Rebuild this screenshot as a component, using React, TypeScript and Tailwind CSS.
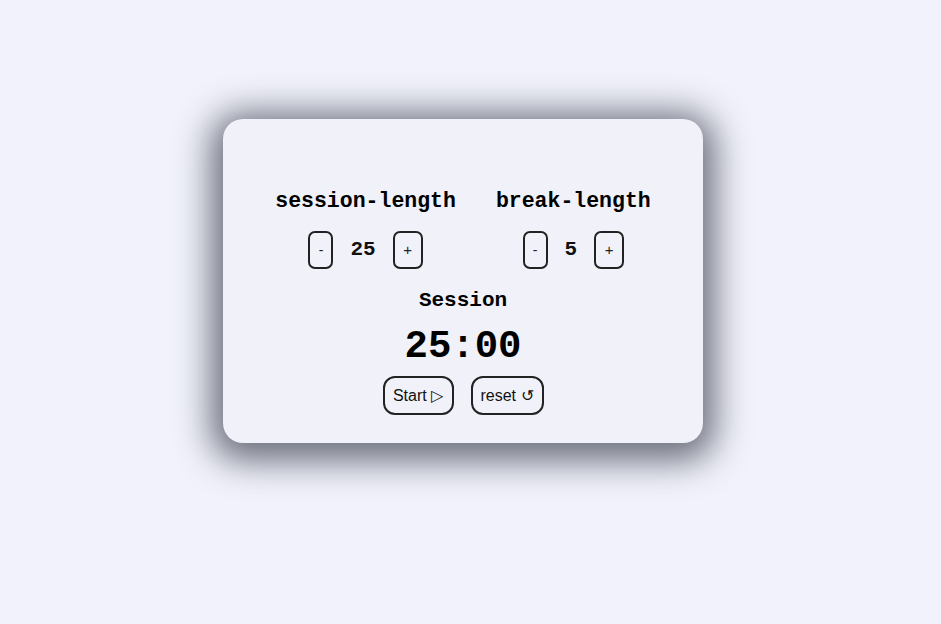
import { useState } from "react";

const mono = { fontFamily: '"Liberation Mono", "Courier New", monospace' };

function LengthControl({ label, value, onDec, onInc }: { label: string; value: number; onDec: () => void; onInc: () => void }) {
  return (
    <div className="flex flex-col items-center">
      <h3 className="text-[21.5px] leading-[24px] font-bold text-black" style={mono}>
        {label}
      </h3>
      <div className="mt-[18px] flex items-center gap-[17px]">
        <button
          onClick={onDec}
          className="h-[38px] w-[25px] rounded-[7px] border-2 border-[#222] text-[14px] text-[#222] font-['Liberation_Sans',sans-serif]"
        >
          -
        </button>
        <span className="text-[21px] font-bold leading-[24px] text-[#111]" style={mono}>
          {value}
        </span>
        <button
          onClick={onInc}
          className="h-[38px] w-[30px] rounded-[7px] border-2 border-[#222] text-[15px] text-[#222] font-['Liberation_Sans',sans-serif]"
        >
          +
        </button>
      </div>
    </div>
  );
}

export default function App() {
  const [session, setSession] = useState(25);
  const [brk, setBrk] = useState(5);

  return (
    <div className="min-h-[624px] w-full bg-[#f1f2fb] pt-[119px] pl-[223px]">
      <div className="flex h-[324px] w-[480px] flex-col items-center rounded-[20px] bg-[#f0f1f9] pt-[70px] shadow-[0_6px_34px_12px_rgba(58,62,76,0.72)]">
        <div className="flex gap-[40px]">
          <LengthControl
            label="session-length"
            value={session}
            onDec={() => setSession((s) => Math.max(1, s - 1))}
            onInc={() => setSession((s) => Math.min(60, s + 1))}
          />
          <LengthControl
            label="break-length"
            value={brk}
            onDec={() => setBrk((b) => Math.max(1, b - 1))}
            onInc={() => setBrk((b) => Math.min(60, b + 1))}
          />
        </div>
        <div className="mt-[20px] text-[21px] font-bold leading-[24px] text-black" style={mono}>
          Session
        </div>
        <div className="mt-[14px] text-[39px] font-bold leading-[40px] text-black" style={mono}>
          {String(session).padStart(2, "0")}:00
        </div>
        <div className="mt-[9px] flex gap-[17px] font-['Liberation_Sans',sans-serif]">
          <button className="h-[39px] w-[71px] rounded-[12px] border-2 border-[#222] text-base text-[#111]">
            Start ▷
          </button>
          <button className="h-[39px] w-[73px] rounded-[12px] border-2 border-[#222] text-base text-[#111]">
            reset ↺
          </button>
        </div>
      </div>
    </div>
  );
}
